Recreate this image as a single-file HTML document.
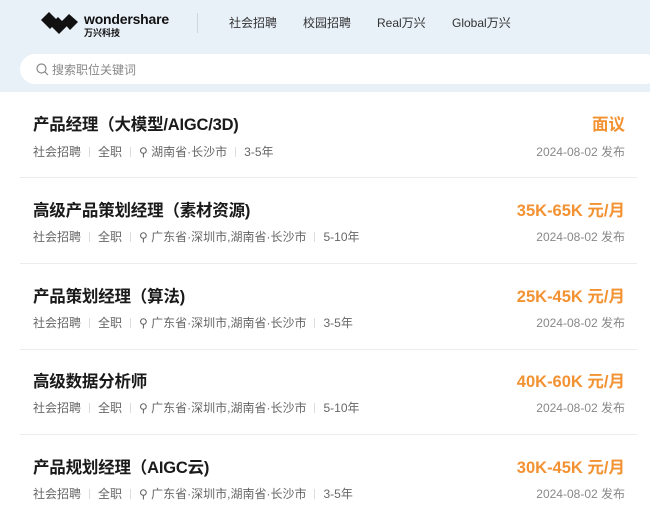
<!DOCTYPE html>
<html><head><meta charset="utf-8"><style>
*{margin:0;padding:0;box-sizing:border-box}
body{width:650px;height:516px;overflow:hidden;background:#fff;font-family:"Liberation Sans","Noto Sans CJK SC",sans-serif;position:relative}
.hdr{position:absolute;left:0;top:0;width:650px;height:92px;background:#e8f0f8}
.logo{position:absolute;left:41px;top:12px}
.brand{position:absolute;left:84px;top:11px;font-size:14px;color:#111;font-weight:bold;letter-spacing:-0.2px}
.brand2{position:absolute;left:84px;top:26px;font-size:9px;color:#111;font-weight:bold}
.sep{position:absolute;left:197px;top:13px;width:1px;height:20px;background:#cfd6de}
.nav{position:absolute;top:14px;font-size:12px;color:#333}
.search{position:absolute;left:20px;top:54px;width:640px;height:30px;background:#fff;border-radius:15px}
.search span{position:absolute;left:32px;top:7px;font-size:12px;color:#888}
.t{position:absolute;left:33px;font-size:16.5px;font-weight:bold;color:#1a1a1a;letter-spacing:-0.2px}
.m{position:absolute;left:33px;font-size:12px;color:#666;white-space:nowrap}
.m i{display:inline-block;width:1px;height:10px;background:#ddd;margin:0 8px;vertical-align:-1px}
.p{position:absolute;right:25px;font-size:16.5px;font-weight:bold;color:#f39232}
.d{position:absolute;right:25px;font-size:12px;color:#888}
.ln{position:absolute;left:20px;width:617px;height:1px;background:#ececec}
</style></head><body>
<div class="hdr">
<svg class="logo" width="38" height="22" viewBox="0 0 38 22"><path d="M0 8 L8 0 L17 9 L9 17Z M9 13 L17 5 L26 14 L18 22Z M21 9 L28 2 L37 10 L29 18Z" fill="#111"/></svg>
<div class="brand">wondershare</div>
<div class="brand2">万兴科技</div>
<div class="sep"></div>
<div class="nav" style="left:229px">社会招聘</div>
<div class="nav" style="left:303px">校园招聘</div>
<div class="nav" style="left:377px">Real万兴</div>
<div class="nav" style="left:452px">Global万兴</div>
<div class="search"><svg style="position:absolute;left:16px;top:9px" width="13" height="13" viewBox="0 0 13 13"><circle cx="5.5" cy="5.5" r="4.5" fill="none" stroke="#888" stroke-width="1.2"/><path d="M9 9 L12 12" stroke="#888" stroke-width="1.2"/></svg><span>搜索职位关键词</span></div>
</div>

<div class="t" style="top:111px">产品经理（大模型/AIGC/3D)</div>
<div class="m" style="top:143px">社会招聘<i></i>全职<i></i>⚲ 湖南省·长沙市<i></i>3-5年</div>
<div class="p" style="top:111px">面议</div>
<div class="d" style="top:143px">2024-08-02 发布</div>
<div class="ln" style="top:177px"></div>

<div class="t" style="top:197px">高级产品策划经理（素材资源)</div>
<div class="m" style="top:228px">社会招聘<i></i>全职<i></i>⚲ 广东省·深圳市,湖南省·长沙市<i></i>5-10年</div>
<div class="p" style="top:197px">35K-65K 元/月</div>
<div class="d" style="top:228px">2024-08-02 发布</div>
<div class="ln" style="top:263px"></div>

<div class="t" style="top:283px">产品策划经理（算法)</div>
<div class="m" style="top:314px">社会招聘<i></i>全职<i></i>⚲ 广东省·深圳市,湖南省·长沙市<i></i>3-5年</div>
<div class="p" style="top:283px">25K-45K 元/月</div>
<div class="d" style="top:314px">2024-08-02 发布</div>
<div class="ln" style="top:349px"></div>

<div class="t" style="top:368px">高级数据分析师</div>
<div class="m" style="top:399px">社会招聘<i></i>全职<i></i>⚲ 广东省·深圳市,湖南省·长沙市<i></i>5-10年</div>
<div class="p" style="top:368px">40K-60K 元/月</div>
<div class="d" style="top:399px">2024-08-02 发布</div>
<div class="ln" style="top:434px"></div>

<div class="t" style="top:454px">产品规划经理（AIGC云)</div>
<div class="m" style="top:485px">社会招聘<i></i>全职<i></i>⚲ 广东省·深圳市,湖南省·长沙市<i></i>3-5年</div>
<div class="p" style="top:454px">30K-45K 元/月</div>
<div class="d" style="top:485px">2024-08-02 发布</div>
</body></html>
